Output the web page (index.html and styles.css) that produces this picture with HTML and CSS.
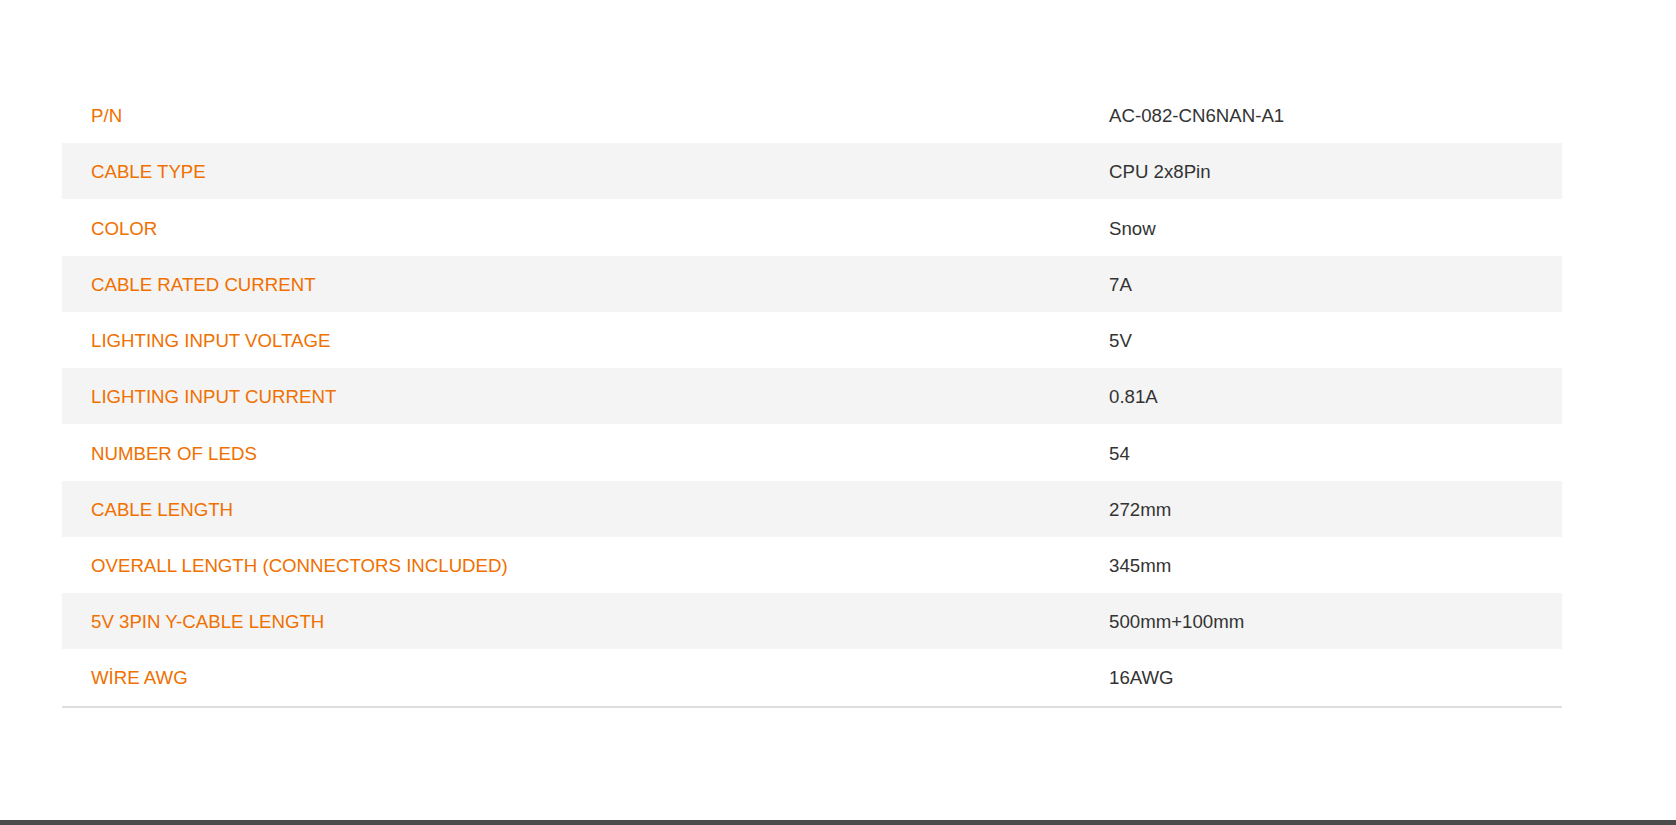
FILE: index.html
```html
<!DOCTYPE html>
<html lang="en">
<head>
<meta charset="utf-8">
<title>Specifications</title>
<link rel="stylesheet" href="styles.css">
</head>
<body>
<main class="page">
  <table class="specs">
    <colgroup><col class="col-label"><col class="col-value"></colgroup>
    <tbody>
      <tr><th>P/N</th><td>AC-082-CN6NAN-A1</td></tr>
      <tr><th>CABLE TYPE</th><td>CPU 2x8Pin</td></tr>
      <tr><th>COLOR</th><td>Snow</td></tr>
      <tr><th>CABLE RATED CURRENT</th><td>7A</td></tr>
      <tr><th>LIGHTING INPUT VOLTAGE</th><td>5V</td></tr>
      <tr><th>LIGHTING INPUT CURRENT</th><td>0.81A</td></tr>
      <tr><th>NUMBER OF LEDS</th><td>54</td></tr>
      <tr><th>CABLE LENGTH</th><td>272mm</td></tr>
      <tr><th>OVERALL LENGTH (CONNECTORS INCLUDED)</th><td>345mm</td></tr>
      <tr><th>5V 3PIN Y-CABLE LENGTH</th><td>500mm+100mm</td></tr>
      <tr><th>WİRE AWG</th><td>16AWG</td></tr>
    </tbody>
  </table>
</main>
<footer class="footer"></footer>
</body>
</html>
```
FILE: styles.css
```css
html, body {
  margin: 0;
  padding: 0;
  background: #ffffff;
}
body {
  min-height: 100vh;
  display: flex;
  flex-direction: column;
  font-family: "Liberation Sans", Arial, sans-serif;
}
.page {
  flex: 1;
  padding: 87px 0 0 62px;
}
.specs {
  width: 1500px;
  border-collapse: collapse;
  border-bottom: 2px solid #dddddd;
  font-size: 18.67px;
}
.col-label { width: 1018px; }
.specs th,
.specs td {
  padding: 14.1px 29px 12.15px;
  line-height: 30px;
  text-align: left;
  font-weight: normal;
  vertical-align: middle;
}
.specs th { color: #f07000; }
.specs td { color: #333333; }
.specs tr:nth-child(even) { background: #f4f4f4; }
.footer {
  height: 5px;
  background: #4b4b4b;
}
```
